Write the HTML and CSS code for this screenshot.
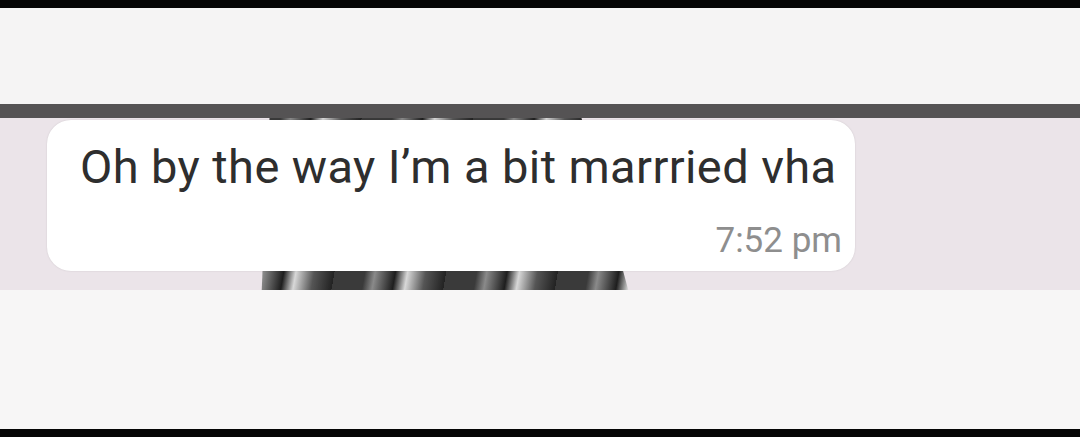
FILE: index.html
```html
<!DOCTYPE html>
<html>
<head>
<meta charset="utf-8">
<link rel="stylesheet" href="styles.css">
</head>
<body>
<div class="frame">
  <div class="edge"></div>
  <div class="header"></div>
  <div class="divider"></div>
  <div class="chat">
    <div class="photo"></div>
    <div class="bubble">
      <p class="msg">Oh by the way I’m a bit marrried vha</p>
      <span class="time">7:52 pm</span>
    </div>
  </div>
  <div class="footer"></div>
  <div class="edge"></div>
</div>
</body>
</html>
```
FILE: styles.css
```css
* { box-sizing: border-box; }
html, body { margin: 0; padding: 0; }
body {
  width: 1080px;
  height: 437px;
  overflow: hidden;
  background: #f6f5f5;
  font-family: Roboto, "Liberation Sans", sans-serif;
}
.frame {
  display: flex;
  flex-direction: column;
  height: 437px;
}
.edge {
  height: 8px;
  background: #050505;
  flex: none;
}
.header {
  height: 96px;
  background: #f5f4f4;
  flex: none;
}
.divider {
  height: 14px;
  background: #555354;
  flex: none;
}
.chat {
  position: relative;
  height: 172px;
  flex: none;
  background: #ebe4e9;
  padding: 2px 0 0 47px;
}
.photo {
  position: absolute;
  left: 250px;
  top: 0;
  width: 390px;
  height: 172px;
  background: repeating-linear-gradient(100deg, #3a3a3a 0 30px, #8a8a8a 40px, #1e1e1e 60px, #d8d8d8 72px, #555 90px, #222 110px);
  clip-path: polygon(5% 0, 85% 0, 97% 100%, 3% 100%);
}
.bubble {
  position: relative;
  width: 808px;
  height: 151px;
  background: #ffffff;
  border-radius: 24px;
  padding: 23px 0 0 33px;
  box-shadow: 0 0 2px rgba(0,0,0,0.12);
}
.msg {
  margin: 0;
  font-size: 47px;
  line-height: 47px;
  color: #2e2e2e;
  letter-spacing: 0.4px;
}
.time {
  display: block;
  text-align: right;
  padding-right: 13px;
  margin-top: 33px;
  font-size: 35px;
  line-height: 35px;
  color: #8e8e8e;
}
.footer {
  flex: 1;
  background: #f7f6f6;
}
```
